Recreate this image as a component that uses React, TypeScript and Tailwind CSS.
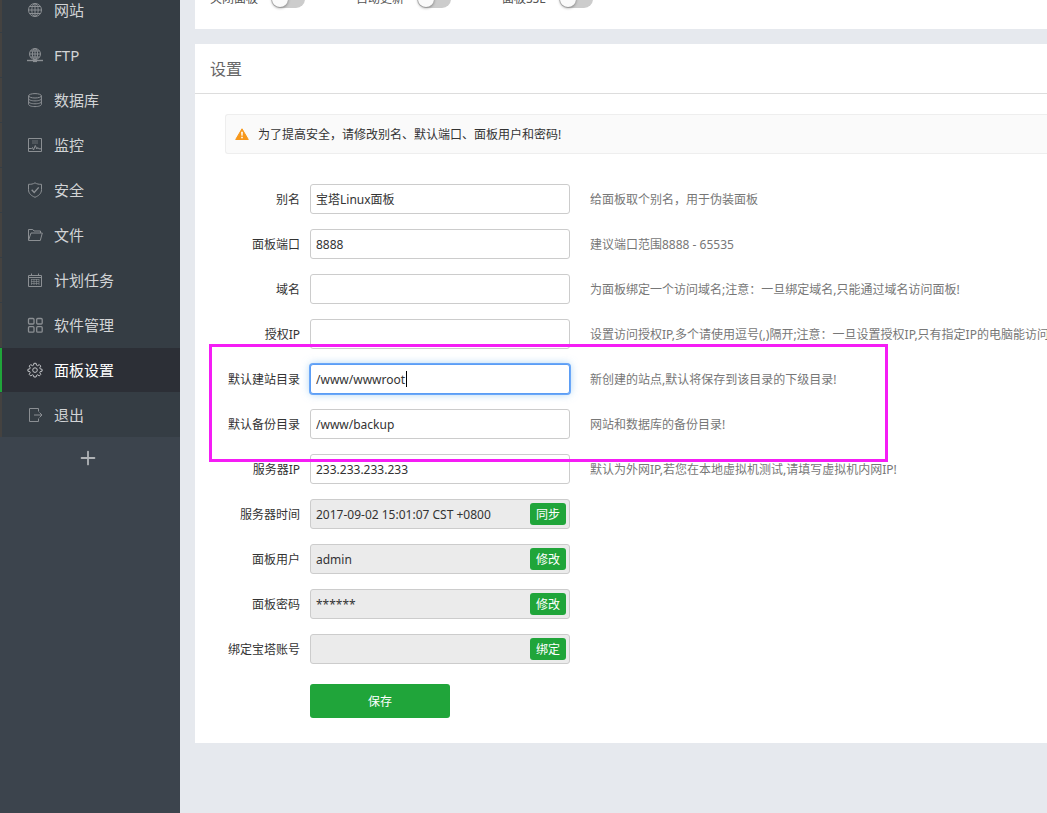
import clsx from 'clsx';
import { Plus } from 'lucide-react';
import React from 'react';

interface IconProps {
  children: React.ReactNode;
  className?: string;
}

const Icon: React.FC<IconProps> = ({ children, className }) => (
  <svg
    viewBox="0 0 16 16"
    className={clsx('h-4 w-4 shrink-0', className)}
    fill="none"
    stroke="currentColor"
    strokeWidth="1"
    aria-hidden="true"
  >
    {children}
  </svg>
);

const globe = (
  <>
    <circle cx="8" cy="8" r="6.5" />
    <ellipse cx="8" cy="8" rx="3.2" ry="6.5" />
    <path d="M8 1.5v13M1.5 8h13M2.6 4.5h10.8M2.6 11.5h10.8" />
  </>
);

const ftp = (
  <>
    <circle cx="8" cy="7" r="5.5" />
    <ellipse cx="8" cy="7" rx="2.6" ry="5.5" />
    <path d="M8 1.5v11M2.5 7h11M3.5 4h9M3.5 10h9" />
    <path d="M0 13.5h16" strokeWidth="1.4" />
    <path d="M6 13.8h4" strokeWidth="2.6" />
  </>
);

const database = (
  <>
    <ellipse cx="8" cy="3.8" rx="6.4" ry="2.2" />
    <path d="M1.6 3.8v8.6c0 1.2 2.8 2.2 6.4 2.2s6.4-1 6.4-2.2V3.8" />
    <path d="M1.6 6.6c0 1.3 2.8 2.3 6.4 2.3s6.4-1 6.4-2.3M1.6 9.5c0 1.3 2.8 2.3 6.4 2.3s6.4-1 6.4-2.3" />
  </>
);

const monitor = (
  <>
    <path d="M1.5 1.5h13v13h-13z" />
    <path d="M5 4h6M5 6h6" strokeOpacity="0.6" />
    <path d="M2 11.5h2.5l1-1 1 2.5 1.8-4.5 1.5 3.5 1-1.5 1 1.3h2.5" />
  </>
);

const shield = (
  <>
    <path d="M8 .8c1.800 1.300 4 1.600 6.500 1.500v5.400c0 3.600-2.600 6-6.500 7.600C4.100 13.700 1.500 11.300 1.500 7.700V2.300C4 2.400 6.200 2.100 8 .8z" />
    <path d="M4.700 7.700l2.500 2.700 4.500-5" strokeWidth="1.4" />
  </>
);

const folder = (
  <path d="M1.5 13.2V2.500h4.300l1.200 1.500h6.500v2M1.500 13.300L4 6h11.300l-2 7.500H1.500" />
);

const calendar = (
  <>
    <path d="M1.500 3.500h13v11h-13zM1.500 5.500h13M4.500 1.500v2.500M11.500 1.500v2.500" />
    <path
      d="M4 7.500h8M4 9.500h8M4 11.500h8M4.500 7v6M7 7v6M9.500 7v6M12 7v6"
      strokeOpacity="0.6"
    />
  </>
);

const grid = (
  <g strokeWidth="1.3">
    <rect x="1.5" y="1.5" width="5.5" height="5.5" rx="1" />
    <rect x="9.7" y="1.5" width="5.5" height="5.5" rx="1" />
    <rect x="1.5" y="9.7" width="5.5" height="5.5" rx="1" />
    <rect x="9.7" y="9.7" width="5.5" height="5.5" rx="1" />
  </g>
);

const gear = (
  <>
    <path d="M6.900 1.300h2.200l.4 1.900 1.100.5 1.700-1.100 1.500 1.500-1 1.700.4 1.100 1.900.4v1.900l-1.900.4-.4 1.100 1 1.700-1.500 1.500-1.700-1.100-1.100.5-.4 1.700H6.900l-.4-1.700-1.100-.5-1.700 1.100-1.500-1.500 1-1.700-.4-1.100-1.900-.4V7.300l1.900-.4.4-1.100-1-1.700 1.500-1.500 1.700 1.100 1.100-.5z" />
    <circle cx="8" cy="8.1" r="2.3" />
  </>
);

const logout = (
  <>
    <path d="M11.5 4.500v-3h-9v13h9v-3" />
    <path d="M7 8h8M12.500 5.500L15 8l-2.500 2.500" />
  </>
);

const menu = [
  { name: '网站', icon: globe },
  { name: 'FTP', icon: ftp },
  { name: '数据库', icon: database },
  { name: '监控', icon: monitor },
  { name: '安全', icon: shield },
  { name: '文件', icon: folder },
  { name: '计划任务', icon: calendar },
  { name: '软件管理', icon: grid },
  { name: '面板设置', icon: gear, active: true },
  { name: '退出', icon: logout },
];

const switches = ['关闭面板', '自动更新', '面板SSL'];

interface Field {
  id: string;
  label: string;
  value: string;
  hint?: string;
  action?: string;
  focused?: boolean;
}

const fields: Field[] = [
  { id: 'alias', label: '别名', value: '宝塔Linux面板', hint: '给面板取个别名，用于伪装面板' },
  { id: 'port', label: '面板端口', value: '8888', hint: '建议端口范围8888 - 65535' },
  {
    id: 'domain',
    label: '域名',
    value: '',
    hint: '为面板绑定一个访问域名;注意：一旦绑定域名,只能通过域名访问面板!',
  },
  {
    id: 'limitip',
    label: '授权IP',
    value: '',
    hint: '设置访问授权IP,多个请使用逗号(,)隔开;注意：一旦设置授权IP,只有指定IP的电脑能访问面板!',
  },
  {
    id: 'sites_path',
    label: '默认建站目录',
    value: '/www/wwwroot',
    hint: '新创建的站点,默认将保存到该目录的下级目录!',
    focused: true,
  },
  { id: 'backup_path', label: '默认备份目录', value: '/www/backup', hint: '网站和数据库的备份目录!' },
  {
    id: 'address',
    label: '服务器IP',
    value: '233.233.233.233',
    hint: '默认为外网IP,若您在本地虚拟机测试,请填写虚拟机内网IP!',
  },
  { id: 'systemdate', label: '服务器时间', value: '2017-09-02 15:01:07 CST +0800', action: '同步' },
  { id: 'username', label: '面板用户', value: 'admin', action: '修改' },
  { id: 'password', label: '面板密码', value: '******', action: '修改' },
  { id: 'btusername', label: '绑定宝塔账号', value: '', action: '绑定' },
];

const Sidebar: React.FC = () => (
  <aside className="w-[180px] shrink-0 bg-[#3c444d]">
    <nav className="-mt-[13px] bg-[#353d44]">
      <ul>
        {menu.map((item) => (
          <li key={item.name} className="pt-px">
            <a
              href="#"
              className={clsx(
                'flex h-11 items-center gap-[11px] border-l-2 pl-[25px] text-[15px]',
                item.active
                  ? 'border-[#20a53a] bg-[#2c2f36] text-white'
                  : 'border-[#444240] text-[#d2d4d6]'
              )}
            >
              <Icon className={item.active ? 'text-[#c3c5c8]' : 'text-[#8b8f93]'}>
                {item.icon}
              </Icon>
              {item.name}
            </a>
          </li>
        ))}
      </ul>
    </nav>
    <button
      type="button"
      aria-label="添加"
      className="flex h-[42px] w-full items-center justify-center pr-1 text-[#b0b3b6]"
    >
      <Plus className="h-[22px] w-[22px]" strokeWidth={2} />
    </button>
  </aside>
);

const FieldRow: React.FC<{ field: Field }> = ({ field }) => (
  <div className="flex items-center whitespace-nowrap">
    <label htmlFor={field.id} className="w-[75px] shrink-0 pt-0.5 text-right">
      {field.label}
    </label>
    <div className="relative ml-[10px] w-[260px] shrink-0">
      <input
        id={field.id}
        type="text"
        defaultValue={field.value}
        disabled={Boolean(field.action)}
        className={clsx(
          'block h-[30px] w-full rounded-[3px] border px-[5px] outline-none',
          field.action ? 'bg-[#ebebeb]' : 'bg-white',
          field.focused
            ? 'border-[#5b9df5] shadow-[0_0_0_1px_#6aa7f8,0_0_8px_#66afe999]'
            : 'border-[#ccc]'
        )}
      />
      {field.focused && (
        <span className="absolute top-[7px] left-24 h-4 w-px bg-black" />
      )}
      {field.action && (
        <button
          type="button"
          className="absolute top-1 right-1 h-[22px] w-9 rounded-[3px] bg-[#20a53a] pt-0.5 text-white"
        >
          {field.action}
        </button>
      )}
    </div>
    {field.hint && <span className="ml-5 pt-0.5 text-[#777]">{field.hint}</span>}
  </div>
);

const App: React.FC = () => {
  return (
    <div className="flex min-h-screen overflow-hidden bg-[#e6e9ee] font-['Noto_Sans','Noto_Sans_CJK_SC',sans-serif] text-[12px] leading-5 text-[#333]">
      <Sidebar />
      <main className="ml-[15px] min-w-0 flex-1 overflow-hidden">
        <section className="-mt-[11px] flex gap-[51px] bg-white pb-5 pl-[15px] text-[#555]">
          {switches.map((name) => (
            <label key={name} className="flex h-5 items-center gap-[13px]">
              {name}
              <input type="checkbox" className="peer sr-only" />
              <span className="flex h-[18px] w-[34px] rounded-full bg-[#ccc] p-px">
                <span className="h-4 w-4 rounded-full bg-[#fafafa] shadow-[0_1px_3px_#00000066]" />
              </span>
            </label>
          ))}
        </section>

        <section className="mt-[15px] bg-white pb-[25px]">
          <h2 className="border-b border-[#ddd] pt-[14px] pb-3 pl-[15px] text-[16px] leading-[23px] text-[#666]">
            设置
          </h2>
          <div className="pt-5 pl-[30px]">
            <div className="flex h-10 items-center gap-[9px] rounded-l-[3px] border-y border-l border-[#eee] bg-[#fafafa] pl-[9px]">
              <svg viewBox="0 0 14 12" className="h-3 w-[14px]" aria-hidden="true">
                <path
                  d="M7 .8L13.300 11.500H.7z"
                  fill="#f7981c"
                  stroke="#f7981c"
                  strokeLinejoin="round"
                />
                <path d="M6.100 3.800h1.800l-.3 4H6.400zM6.200 8.700h1.600v1.600H6.200z" fill="#fff" />
              </svg>
              <p className="pt-0.5">为了提高安全，请修改别名、默认端口、面板用户和密码!</p>
            </div>

            <form className="relative mt-[30px]" onSubmit={(e) => e.preventDefault()}>
              <div className="flex flex-col gap-[15px]">
                {fields.map((field) => (
                  <FieldRow key={field.id} field={field} />
                ))}
              </div>
              <button
                type="submit"
                className="mt-5 ml-[85px] h-[34px] w-[140px] rounded-[3px] bg-[#20a53a] pt-0.5 text-white"
              >
                保存
              </button>
              {/* Default directories highlight */}
              <div className="pointer-events-none absolute top-40 -left-4 h-[118px] w-[679px] border-3 border-[#f51df5]" />
            </form>
          </div>
        </section>
      </main>
    </div>
  );
};

export default App;
